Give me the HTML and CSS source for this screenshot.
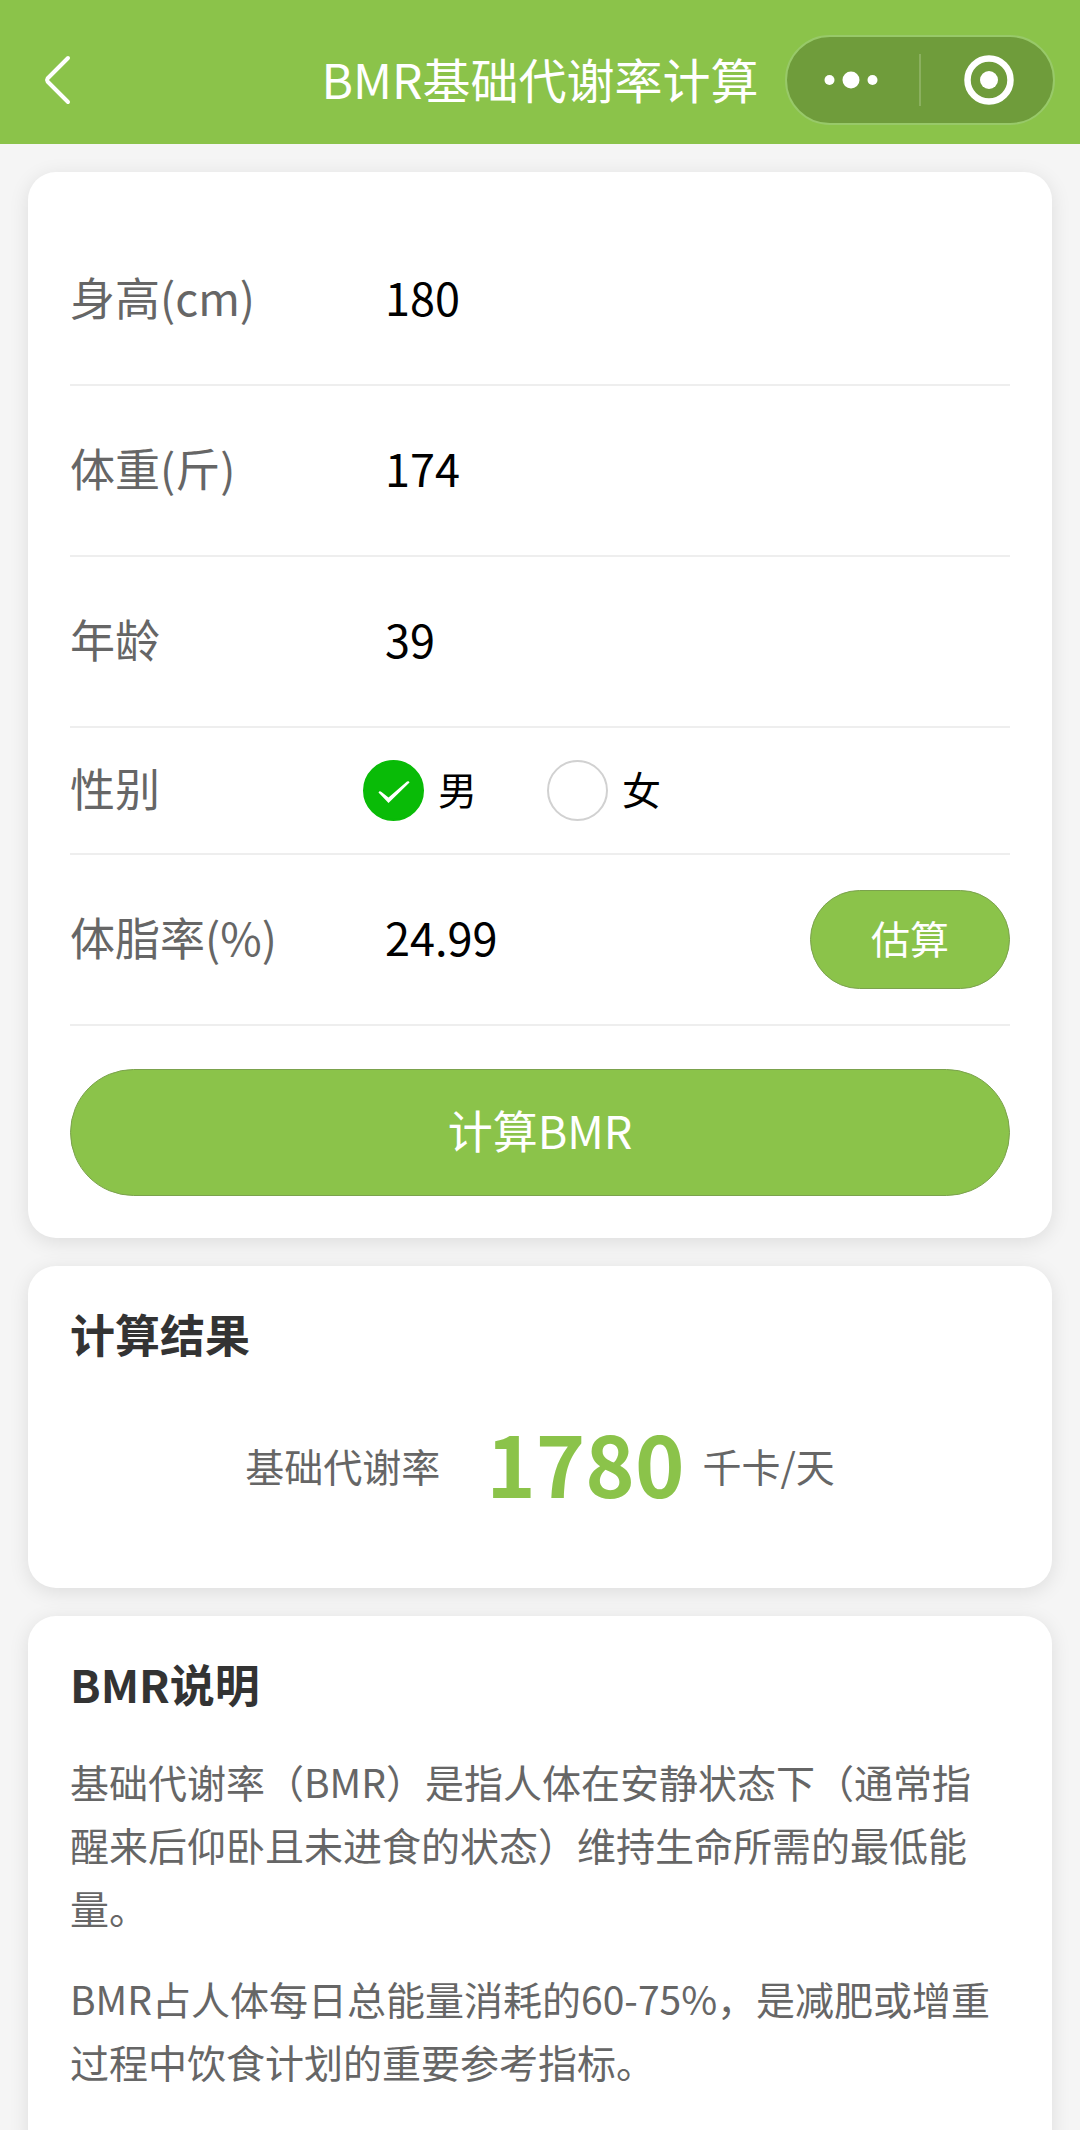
FILE: index.html
```html
<!DOCTYPE html>
<html lang="zh-CN">
<head>
<meta charset="utf-8">
<meta name="viewport" content="width=device-width, initial-scale=1">
<title>BMR基础代谢率计算</title>
<link rel="stylesheet" href="styles.css">
</head>
<body>
<header class="navbar">
  <button class="back" type="button" aria-label="返回">
    <svg width="32" height="52" viewBox="0 0 32 52" fill="none" stroke="#fff" stroke-width="4" stroke-linecap="round" stroke-linejoin="round" aria-hidden="true"><path d="M26 4 5.500 24.500Q4.500 26 5.500 27.500L26 48"/></svg>
  </button>
  <h1 class="navbar-title">BMR基础代谢率计算</h1>
  <div class="capsule">
    <button class="capsule-button capsule-more" type="button" aria-label="更多">
      <svg width="54" height="20" viewBox="0 0 54 20" fill="#fff" aria-hidden="true"><circle cx="5.5" cy="10" r="5"/><circle cx="27" cy="10" r="8.5"/><circle cx="48.5" cy="10" r="5"/></svg>
    </button>
    <button class="capsule-button capsule-close" type="button" aria-label="关闭">
      <svg width="50" height="50" viewBox="0 0 50 50" aria-hidden="true"><circle cx="25" cy="25" r="21.5" fill="none" stroke="#fff" stroke-width="6.5"/><circle cx="25" cy="25" r="9" fill="#fff"/></svg>
    </button>
  </div>
</header>

<main class="page">
  <form class="card card-form">
    <div class="row">
      <label class="row-label" for="height">身高(cm)</label>
      <input class="row-input" id="height" type="text" inputmode="decimal" value="180">
    </div>
    <div class="row">
      <label class="row-label" for="weight">体重(斤)</label>
      <input class="row-input" id="weight" type="text" inputmode="decimal" value="174">
    </div>
    <div class="row">
      <label class="row-label" for="age">年龄</label>
      <input class="row-input" id="age" type="text" inputmode="numeric" value="39">
    </div>
    <div class="row row-short" role="radiogroup" aria-labelledby="gender">
      <span class="row-label" id="gender">性别</span>
      <div class="radios">
        <label class="radio"><input class="radio-input" type="radio" name="gender" value="male" checked><span class="radio-text">男</span></label>
        <label class="radio"><input class="radio-input" type="radio" name="gender" value="female"><span class="radio-text">女</span></label>
      </div>
    </div>
    <div class="row">
      <label class="row-label" for="fat">体脂率(%)</label>
      <input class="row-input" id="fat" type="text" inputmode="decimal" value="24.99">
      <button class="button button-small" type="button">估算</button>
    </div>
    <button class="button button-large" type="button">计算BMR</button>
  </form>

  <section class="card">
    <h2 class="card-title">计算结果</h2>
    <div class="result">
      <span class="result-label">基础代谢率</span>
      <strong class="result-value">1780</strong>
      <span class="result-unit">千卡/天</span>
    </div>
  </section>

  <section class="card">
    <h2 class="card-title">BMR说明</h2>
    <p class="note">基础代谢率（BMR）是指人体在安静状态下（通常指醒来后仰卧且未进食的状态）维持生命所需的最低能量。</p>
    <p class="note">BMR占人体每日总能量消耗的60-75%，是减肥或增重过程中饮食计划的重要参考指标。</p>
  </section>
</main>
</body>
</html>
```
FILE: styles.css
```css
* {
  box-sizing: border-box;
}

body {
  margin: 0;
  background: #f5f5f5;
  color: #333;
  font-family: "Noto Sans CJK SC", sans-serif;
}

button,
input {
  margin: 0;
  border: 0;
  font: inherit;
}

.navbar {
  display: grid;
  grid-template-columns: 1fr auto 1fr;
  align-items: center;
  height: 144px;
  padding-top: 16px;
  background: #8bc34a;
  color: #fff;
}

.back {
  display: flex;
  justify-self: start;
  margin-left: 42px;
  padding: 0;
  background: none;
}

.navbar-title {
  margin: 0;
  padding-bottom: 4px;
  font-size: 48px;
  font-weight: 400;
  line-height: 64px;
}

.capsule {
  display: flex;
  justify-self: end;
  width: 270px;
  height: 90px;
  margin-right: 25px;
  padding: 17px 0;
  border: 2px solid #98c969;
  border-radius: 45px;
  background: #6f9c3b;
}

.capsule-button {
  display: flex;
  flex: 1;
  align-items: center;
  justify-content: center;
  padding: 0;
  background: none;
}

.capsule-more {
  padding-right: 4px;
}

.capsule-close {
  padding-left: 4px;
  border-left: 2px solid #8bb05f;
}

.page {
  display: flex;
  flex-direction: column;
  gap: 28px;
  padding: 28px;
}

.card {
  padding: 42px;
  border-radius: 28px;
  background: #fff;
  box-shadow: 0 4px 20px rgba(0, 0, 0, 0.1);
}

.card-form {
  padding-top: 43px;
}

.row {
  display: flex;
  align-items: center;
  height: 171px;
  border-bottom: 2px solid #eee;
}

.row-short {
  height: 127px;
}

.row-label {
  flex: none;
  width: 293px;
  padding-bottom: 6px;
  color: #666;
  font-size: 45px;
  line-height: 64px;
}

.row-input {
  flex: 1;
  min-width: 0;
  padding: 0 22px 6px;
  background: none;
  color: #000;
  font-size: 45px;
  line-height: 64px;
}

.radios {
  display: flex;
  gap: 70px;
}

.radio {
  display: flex;
  align-items: center;
  gap: 14px;
  color: #000;
  font-size: 39px;
  line-height: 56px;
}

.radio-text {
  padding-bottom: 6px;
}

.radio-input {
  width: 61px;
  height: 61px;
  appearance: none;
  border: 2px solid #d1d1d1;
  border-radius: 50%;
  background: #fff;
}

.radio-input:checked {
  border-color: #09bb07;
  background: #09bb07 url("data:image/svg+xml,%3Csvg xmlns='http://www.w3.org/2000/svg' viewBox='0 0 57 57'%3E%3Cpath d='M13.500 30.500Q14.500 28.500 16.500 30L23.500 35.500 42 19.500Q44 18.500 44.500 20.500L23.500 41Z' fill='%23fff'/%3E%3C/svg%3E") center / 100% no-repeat;
}

.button {
  padding: 0 0 6px;
  border: 1px solid #7ba24d;
  background: #8bc34a;
  color: #fff;
}

.button-small {
  width: 200px;
  height: 99px;
  border-radius: 50px;
  font-size: 39px;
}

.button-large {
  display: block;
  width: 100%;
  height: 127px;
  margin-top: 43px;
  border-radius: 64px;
  font-size: 45px;
}

.card-title {
  margin: 0 0 40px;
  font-size: 45px;
  font-weight: 700;
  line-height: 52px;
}

.result {
  display: flex;
  align-items: center;
  justify-content: center;
  height: 146px;
  padding-bottom: 16px;
  color: #666;
  font-size: 39px;
}

.result-value {
  margin: 0 18px 0 46px;
  padding-bottom: 6px;
  color: #8bc34a;
  font-size: 84px;
  font-weight: 700;
  line-height: 120px;
}

.note {
  margin: 0 0 28px;
  color: #666;
  font-size: 39px;
  line-height: 63px;
}
```
